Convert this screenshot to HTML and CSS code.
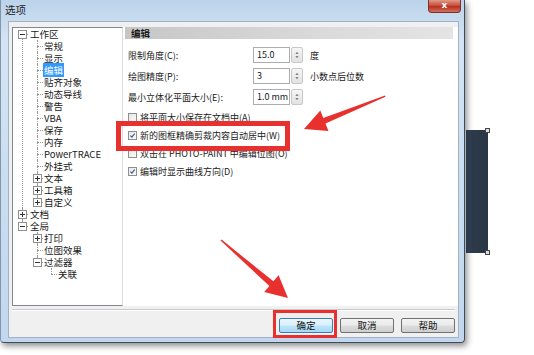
FILE: index.html
```html
<!DOCTYPE html>
<html lang="zh-CN">

<head>
  <meta charset="UTF-8">
  <meta name="viewport" content="width=device-width, initial-scale=1.0">
  <title>选项</title>
  <link rel="stylesheet" href="styles.css">
</head>

<body>
  <div class="canvas">
    <div class="doc-shape"><i class="handle top"></i><i class="handle bottom"></i></div>

    <div class="window">
      <div class="titlebar">
        <span class="title">选项</span>
        <span class="close">x</span>
      </div>
      <div class="client">
        <div class="panes">
          <div class="tree-pane">
            <ul class="tree">
              <li><span class="tog"></span>工作区
                <ul>
                  <li>常规</li>
                  <li>显示</li>
                  <li><span class="sel">编辑</span></li>
                  <li>贴齐对象</li>
                  <li>动态导线</li>
                  <li>警告</li>
                  <li>VBA</li>
                  <li>保存</li>
                  <li>内存</li>
                  <li>PowerTRACE</li>
                  <li>外挂式</li>
                  <li><span class="tog plus"></span>文本</li>
                  <li><span class="tog plus"></span>工具箱</li>
                  <li><span class="tog plus"></span>自定义</li>
                </ul>
              </li>
              <li><span class="tog plus"></span>文档</li>
              <li><span class="tog"></span>全局
                <ul>
                  <li><span class="tog plus"></span>打印</li>
                  <li>位图效果</li>
                  <li><span class="tog"></span>过滤器
                    <ul>
                      <li>关联</li>
                    </ul>
                  </li>
                </ul>
              </li>
            </ul>
          </div>

          <div class="page">
            <div class="page-head">编辑</div>
            <div class="fields">
              <span class="label">限制角度(C):</span>
              <span class="input">15.0</span>
              <svg class="spin" viewBox="0 0 12 16"><path d="M4 6.5 L6 4.5 L8 6.5Z M4 9.5 L6 11.5 L8 9.5Z" /></svg>
              <span class="unit">度</span>

              <span class="label">绘图精度(P):</span>
              <span class="input">3</span>
              <svg class="spin" viewBox="0 0 12 16"><path d="M4 6.5 L6 4.5 L8 6.5Z M4 9.5 L6 11.5 L8 9.5Z" /></svg>
              <span class="unit">小数点后位数</span>

              <span class="label">最小立体化平面大小(E):</span>
              <span class="input">1.0 mm</span>
              <svg class="spin" viewBox="0 0 12 16"><path d="M4 6.5 L6 4.5 L8 6.5Z M4 9.5 L6 11.5 L8 9.5Z" /></svg>
              <span class="unit"></span>
            </div>
            <ul class="checks">
              <li><span class="cb"></span>将平面大小保存在文档中(A)</li>
              <li><span class="cb on"><svg viewBox="0 0 9 9"><path d="M1.8 4.6 L3.7 6.6 L7.3 2" /></svg></span>新的图框精确剪裁内容自动居中(W)</li>
              <li><span class="cb"></span>双击在 PHOTO-PAINT 中编辑位图(O)</li>
              <li><span class="cb on"><svg viewBox="0 0 9 9"><path d="M1.8 4.6 L3.7 6.6 L7.3 2" /></svg></span>编辑时显示曲线方向(D)</li>
            </ul>
          </div>
        </div>
        <div class="sep"></div>
        <div class="buttons">
          <button class="btn default">确定</button>
          <button class="btn">取消</button>
          <button class="btn">帮助</button>
        </div>
      </div>
    </div>

    <svg class="marks" viewBox="0 0 534 355">
      <rect x="118.5" y="123.5" width="169" height="25" />
      <rect x="274.5" y="311.5" width="61" height="25" class="thin" />
      <polygon points="304,129 320.3,110.5 323.3,117.9 385,95.5 385.5,96.8 325.5,123.5 328.5,130.9" />
      <polygon points="288,298 264.2,291.9 269.4,285.9 220.5,240.6 221.5,239.6 273.4,281.3 278.6,275.3" />
    </svg>
  </div>
</body>

</html>
```

FILE: styles.css
```css
html,
body {
  margin: 0;
  padding: 0;
}

body {
  font-family: "Noto Sans CJK SC", "Liberation Sans", sans-serif;
  background: #fff;
  color: #1a1a1a;
}

ul {
  list-style: none;
  margin: 0;
  padding: 0;
}

.canvas {
  position: relative;
  width: 534px;
  height: 355px;
  overflow: hidden;
}

/* object on the drawing behind the dialog */
.doc-shape {
  position: absolute;
  left: 466px;
  top: 130px;
  width: 22px;
  height: 123px;
  background: linear-gradient(to right, #3a4f66, #2c3a49 30%, #2a3645);
}

.handle {
  position: absolute;
  right: -2px;
  width: 3px;
  height: 3px;
  border: 1px solid #444;
  background: #ddd;
}

.handle.top {
  top: -2px;
}

.handle.bottom {
  bottom: -2px;
}

/* dialog window */
.window {
  position: relative;
  z-index: 1;
  width: 465px;
  height: 343px;
  box-sizing: border-box;
  display: flex;
  flex-direction: column;
  border: 1px solid #3d4d5e;
  border-top: 0;
  border-left-color: #8296ab;
  border-radius: 0 0 4px 4px;
  background: linear-gradient(#bcd3eb, #d4e4f4 12%, #c9dcf0 60%, #c2d7ee);
  box-shadow: 2px 3px 6px rgba(0, 0, 0, 0.45);
}

.titlebar {
  height: 21px;
  display: flex;
  justify-content: space-between;
  align-items: flex-start;
}

.title {
  font-size: 10.5px;
  line-height: 20px;
  padding-left: 4px;
  color: #1e1e1e;
}

.close {
  width: 33px;
  height: 13px;
  margin-right: 3px;
  box-sizing: border-box;
  border: 1px solid #7a3030;
  border-top: 0;
  border-radius: 0 0 4px 4px;
  background: linear-gradient(#e19a8a, #c9503e 45%, #b8301f 55%, #d0705c);
  color: #fff;
  font: bold 9px/11px "DejaVu Sans", sans-serif;
  text-align: center;
}

.client {
  flex: 1;
  margin: 0 5px 4px 7px;
  border: 1px solid #9fb2c6;
  background: #f0f0f0;
  padding: 5px 0 4px 3px;
  display: flex;
  flex-direction: column;
}

.panes {
  height: 279px;
  display: flex;
}

/* tree on the left */
.tree-pane {
  width: 111px;
  box-sizing: border-box;
  border: 1px solid #828790;
  border-right-color: #dcdcdc;
  background: #fff;
  overflow: hidden;
}

.tree {
  font-size: 9.5px;
  line-height: 12px;
  white-space: nowrap;
}

.tree li {
  position: relative;
  padding-left: 14px;
}

.tree li::before {
  content: '';
  position: absolute;
  left: 7px;
  top: 6px;
  width: 6px;
  border-top: 1px dotted #9a9a9a;
}

.tree li::after {
  content: '';
  position: absolute;
  left: 7px;
  top: 0;
  bottom: 0;
  border-left: 1px dotted #9a9a9a;
}

.tree li:last-child::after {
  bottom: auto;
  height: 6px;
}

.tree > li {
  padding-left: 17px;
}

.tree > li::before,
.tree > li::after {
  left: 9px;
}

.tree > li:first-child::after {
  top: 6px;
}

.tog {
  position: absolute;
  z-index: 1;
  left: 3px;
  top: 2px;
  width: 7px;
  height: 7px;
  border: 1px solid #8f8f8f;
  background: #fff;
}

.tree > li > .tog {
  left: 5px;
}

.tog::before {
  content: '';
  position: absolute;
  left: 1px;
  right: 1px;
  top: 3px;
  height: 1px;
  background: #333;
}

.tog.plus::after {
  content: '';
  position: absolute;
  top: 1px;
  bottom: 1px;
  left: 3px;
  width: 1px;
  background: #333;
}

.sel {
  background: #3399ff;
  color: #fff;
  padding: 0 1px;
  margin-left: -1px;
}

/* page on the right */
.page {
  flex: 1;
  background: #fff;
  font-size: 9px;
}

.page-head {
  height: 12px;
  margin: 0 5px 0 2px;
  padding-left: 6px;
  font-size: 9.5px;
  font-weight: bold;
  line-height: 12px;
  background: linear-gradient(to right, #c6c6c6, #dadada 60%, #e4e4e4);
}

.fields {
  display: grid;
  grid-template-columns: 125px 37px 12px auto;
  grid-auto-rows: 16px;
  row-gap: 5px;
  align-items: center;
  margin-top: 8px;
  padding-left: 5px;
}

.input {
  height: 16px;
  box-sizing: border-box;
  border: 1px solid #abadb3;
  padding-left: 3px;
  line-height: 14px;
}

.spin {
  width: 12px;
  height: 16px;
  margin-left: 1px;
  box-sizing: border-box;
  border: 1px solid #c8c8c8;
  border-radius: 2px;
  background: linear-gradient(#f6f6f6, #e2e2e2);
  fill: #666;
}

.unit {
  padding-left: 8px;
}

.checks {
  margin-top: 3px;
  padding-left: 5px;
}

.checks li {
  height: 18px;
  display: flex;
  align-items: center;
}

.cb {
  width: 9px;
  height: 9px;
  box-sizing: border-box;
  border: 1px solid #8e8f8f;
  background: linear-gradient(135deg, #e6e6e6, #fafafa);
  margin-right: 3px;
  display: flex;
}

.cb svg {
  width: 7px;
  height: 7px;
  fill: none;
  stroke: #3d5a86;
  stroke-width: 1.4;
}

/* bottom buttons */
.sep {
  margin: 3px 3px 0 0;
  border-top: 1px solid #c9c9c9;
  border-bottom: 1px solid #fff;
}

.buttons {
  margin-top: 7px;
  padding-right: 3px;
  display: flex;
  justify-content: flex-end;
  gap: 7px;
}

.btn {
  width: 54px;
  height: 15px;
  padding: 0;
  border: 1px solid #707070;
  border-radius: 2px;
  background: linear-gradient(#f2f2f2, #ebebeb 48%, #dddddd 52%, #cfcfcf);
  font-family: inherit;
  font-size: 9.5px;
  line-height: 13px;
  color: #111;
}

.btn.default {
  border-color: #3c7fb1;
  background: linear-gradient(#eaf6fd, #d9f0fc 48%, #bee6fd 52%, #a7d9f5);
}

/* red annotation marks */
.marks {
  position: absolute;
  z-index: 2;
  left: 0;
  top: 0;
  width: 534px;
  height: 355px;
  pointer-events: none;
}

.marks rect {
  fill: none;
  stroke: #e8312e;
  stroke-width: 5;
}

.marks rect.thin {
  stroke-width: 3;
}

.marks polygon {
  fill: #e8312e;
}
```
